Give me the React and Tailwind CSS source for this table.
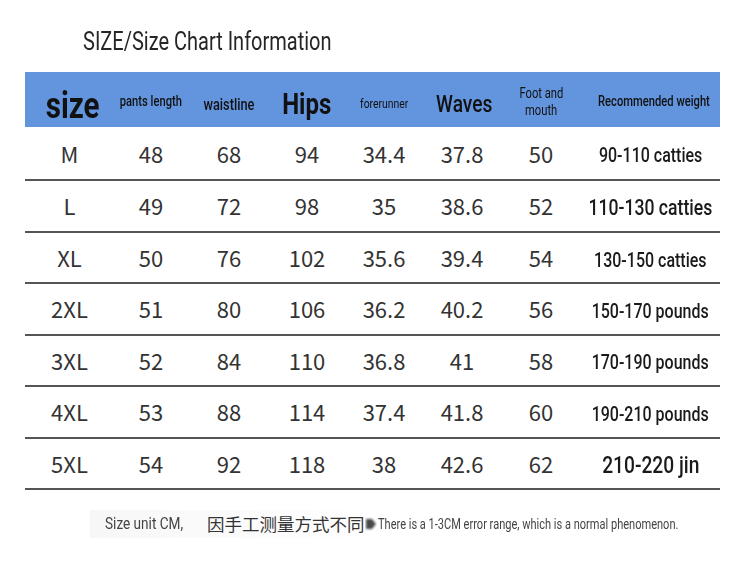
import React from 'react';

const COLS = ['w-[87px]', 'w-[78px]', 'w-[78px]', 'w-[78px]', 'w-[76px]', 'w-[80px]', 'w-[78px]', 'w-[140px]'];

const ROWS = [
  { size: 'M', v: ['48', '68', '94', '34.4', '37.8', '50'], w: '90-110 catties', wc: 'text-[20px] pt-[4px]' },
  { size: 'L', v: ['49', '72', '98', '35', '38.6', '52'], w: '110-130 catties', wc: 'text-[22px] pt-[4px]' },
  { size: 'XL', v: ['50', '76', '102', '35.6', '39.4', '54'], w: '130-150 catties', wc: 'text-[20px] pt-[5px]' },
  { size: '2XL', v: ['51', '80', '106', '36.2', '40.2', '56'], w: '150-170 pounds', wc: 'text-[20px] pt-[4px]' },
  { size: '3XL', v: ['52', '84', '110', '36.8', '41', '58'], w: '170-190 pounds', wc: 'text-[20px] pt-[4px]' },
  { size: '4XL', v: ['53', '88', '114', '37.4', '41.8', '60'], w: '190-210 pounds', wc: 'text-[20px] pt-[4px]' },
  { size: '5XL', v: ['54', '92', '118', '38', '42.6', '62'], w: '210-220 jin', wc: 'text-[24px] pt-[4px]' },
];

const narrow = "font-['Roboto','Liberation_Sans',sans-serif]";
const num = "font-['Noto_Sans_CJK_SC','Noto_Sans',sans-serif]";

// condensed look: Roboto squeezed horizontally
function C({ children, className = '' }) {
  return <span className={`inline-block whitespace-nowrap scale-x-[0.8] ${className}`}>{children}</span>;
}

export default function App() {
  return (
    <div className="w-[750px] h-[566px] bg-white text-[#222] overflow-hidden">
      <div className={`${narrow} pt-[26px] pl-[83px] text-[25px] leading-[32px] text-[#262626]`}>
        <C className="origin-left">SIZE/Size Chart Information</C>
      </div>

      <div className="ml-[25px] mt-[14px] w-[695px]">
        {/* header */}
        <div className={`${narrow} flex h-[55px] bg-[#6395df] text-[#111] whitespace-nowrap`}>
          <div className={`${COLS[0]} flex justify-center items-end pb-[1px] text-[37px] leading-[40px] font-bold pl-[8px]`}><C>size</C></div>
          <div className={`${COLS[1]} flex justify-center items-center pt-[4px] text-[14px] font-medium`}><C>pants length</C></div>
          <div className={`${COLS[2]} flex justify-center items-center pt-[10px] text-[16px] font-medium`}><C>waistline</C></div>
          <div className={`${COLS[3]} flex justify-center items-center pt-[8px] text-[30px] font-bold`}><C>Hips</C></div>
          <div className={`${COLS[4]} flex justify-center items-center pt-[8px] text-[13px]`}><C>forerunner</C></div>
          <div className={`${COLS[5]} flex justify-center items-center pt-[8px] pl-[4px] text-[24px] font-medium`}><C>Waves</C></div>
          <div className={`${COLS[6]} flex flex-col justify-center items-center pt-[4px] text-[14px] leading-[17px]`}>
            <C>Foot and</C>
            <C>mouth</C>
          </div>
          <div className={`${COLS[7]} flex justify-center items-center pt-[4px] pl-[8px] text-[14px] font-medium`}><C>Recommended weight</C></div>
        </div>

        {/* rows */}
        {ROWS.map((r, i) => (
          <div key={r.size} className={`flex items-center border-b-2 border-[#555] ${i === 0 ? 'h-[54px]' : 'h-[51.5px]'}`}>
            <div className={`${COLS[0]} ${num} text-center text-[22px] text-[#333] pl-[2px]`}>{r.size}</div>
            {r.v.map((v, j) => (
              <div key={j} className={`${COLS[j + 1]} ${num} text-center text-[22px] text-[#333]`}>{v}</div>
            ))}
            <div className={`${COLS[7]} ${narrow} ${r.wc} flex justify-center font-medium text-[#1a1a1a] pl-[1px]`}><C>{r.w}</C></div>
          </div>
        ))}
      </div>

      {/* footnote */}
      <div className="mt-[20px] ml-[90px] w-[590px] h-[28px] flex items-center whitespace-nowrap bg-gradient-to-r from-[#f7f7f7] via-white to-white">
        <span className={`${narrow} ml-[15px] text-[17px] text-[#444] w-[84px]`}><C className="origin-left">Size unit CM,</C></span>
        <span className="ml-[18px] text-[17.5px] leading-[20px] text-[#333] font-['Noto_Sans_CJK_SC',sans-serif]">因手工测量方式不同</span>
        <svg width="12" height="16" viewBox="0 0 12 16" className="shrink-0">
          <defs>
            <filter id="b" x="-50%" y="-50%" width="200%" height="200%">
              <feGaussianBlur stdDeviation="0.8" />
            </filter>
          </defs>
          <path d="M1 3 L7 3 L11 8 L7 13 L1 13 Z" fill="#4a4a4a" filter="url(#b)" />
        </svg>
        <span className={`${narrow} ml-[1px] text-[13.8px] text-[#444]`}><C className="origin-left">There is a 1-3CM error range, which is a normal phenomenon.</C></span>
      </div>
    </div>
  );
}
